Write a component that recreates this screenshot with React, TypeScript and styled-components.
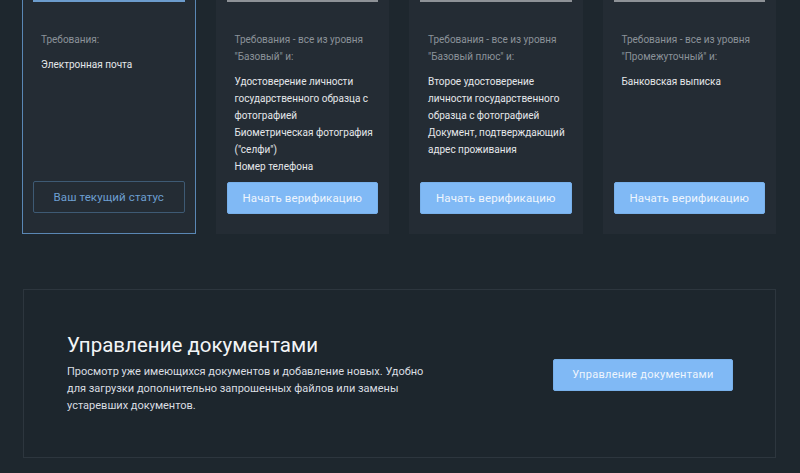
import React from "react";
import styled, { createGlobalStyle } from "styled-components";

const GlobalStyle = createGlobalStyle`
  html, body {
    margin: 0;
    padding: 0;
    background: #1e272e;
    font-family: Roboto, "Liberation Sans", sans-serif;
    -webkit-font-smoothing: antialiased;
  }
  * {
    box-sizing: border-box;
  }
`;

const Page = styled.div`
  width: 800px;
  padding: 0 24px 0 22px;
`;

const LevelGrid = styled.div`
  display: grid;
  grid-template-columns: repeat(4, 1fr);
  gap: 20px;
  align-items: stretch;
`;

const LevelCard = styled.div<{ $current?: boolean }>`
  display: flex;
  flex-direction: column;
  background: #242c34;
  padding: 0 ${(p) => (p.$current ? "10px" : "11px")} 20px;
  border: ${(p) => (p.$current ? "1px solid #5a87b4" : "none")};
  border-top: none;
  min-height: 234px;
`;

const TopStub = styled.div<{ $current?: boolean }>`
  height: 1.5px;
  background: ${(p) => (p.$current ? "#6c9ccd" : "#8e9297")};
`;

const CardBody = styled.div`
  padding: 29px 0 0 8px;
  font-size: 10px;
  line-height: 17px;
`;

const Label = styled.div`
  color: #8b9299;
`;

const ReqList = styled.div`
  margin-top: 8px;
  color: #e4e7ea;
`;

const ActionButton = styled.button<{ $outline?: boolean }>`
  margin-top: auto;
  height: 32px;
  width: 100%;
  border-radius: 2px;
  font-family: Roboto, "Liberation Sans", sans-serif;
  font-size: 11.5px;
  letter-spacing: 0.1px;
  cursor: pointer;
  background: ${(p) => (p.$outline ? "transparent" : "#80b9f5")};
  border: 1px solid ${(p) => (p.$outline ? "#3e5a74" : "#78b0ea")};
  color: ${(p) => (p.$outline ? "#6d9fd1" : "#eef5fd")};
`;

const DocsPanel = styled.section`
  margin-top: 55px;
  margin-left: 1px;
  height: 169px;
  border: 1px solid #2d363e;
  background: #1d262d;
  display: flex;
  align-items: center;
  justify-content: space-between;
  padding: 2px 42px 0 43px;
`;

const DocsText = styled.div`
  max-width: 362px;
  padding-bottom: 4px;
`;

const DocsTitle = styled.h2`
  margin: 0 0 4px;
  font-size: 20.5px;
  font-weight: 400;
  line-height: 28px;
  color: #f3f5f7;
`;

const DocsDescription = styled.p`
  margin: 0;
  font-size: 11px;
  line-height: 17px;
  color: #d9dde1;
`;

const DocsButton = styled(ActionButton)`
  margin-top: 0;
  width: 180px;
  font-size: 11px;
  letter-spacing: 0.3px;
`;

type Level = {
  label: string;
  items: string[];
  current?: boolean;
};

const levels: Level[] = [
  { label: "Требования:", items: ["Электронная почта"], current: true },
  {
    label: "Требования - все из уровня \"Базовый\" и:",
    items: [
      "Удостоверение личности государственного образца с фотографией",
      "Биометрическая фотография (\"селфи\")",
      "Номер телефона",
    ],
  },
  {
    label: "Требования - все из уровня \"Базовый плюс\" и:",
    items: [
      "Второе удостоверение личности государственного образца с фотографией",
      "Документ, подтверждающий адрес проживания",
    ],
  },
  {
    label: "Требования - все из уровня \"Промежуточный\" и:",
    items: ["Банковская выписка"],
  },
];

const App: React.FC = () => {
  return (
    <>
      <GlobalStyle />
      <Page>
        <LevelGrid>
          {levels.map((level, i) => (
            <LevelCard key={i} $current={level.current}>
              <TopStub $current={level.current} />
              <CardBody>
                <Label>{level.label}</Label>
                <ReqList>
                  {level.items.map((item) => (
                    <div key={item}>{item}</div>
                  ))}
                </ReqList>
              </CardBody>
              {level.current ? (
                <ActionButton $outline>Ваш текущий статус</ActionButton>
              ) : (
                <ActionButton>Начать верификацию</ActionButton>
              )}
            </LevelCard>
          ))}
        </LevelGrid>
        <DocsPanel>
          <DocsText>
            <DocsTitle>Управление документами</DocsTitle>
            <DocsDescription>
              Просмотр уже имеющихся документов и добавление новых. Удобно для
              загрузки дополнительно запрошенных файлов или замены устаревших
              документов.
            </DocsDescription>
          </DocsText>
          <DocsButton>Управление документами</DocsButton>
        </DocsPanel>
      </Page>
    </>
  );
};

export default App;
